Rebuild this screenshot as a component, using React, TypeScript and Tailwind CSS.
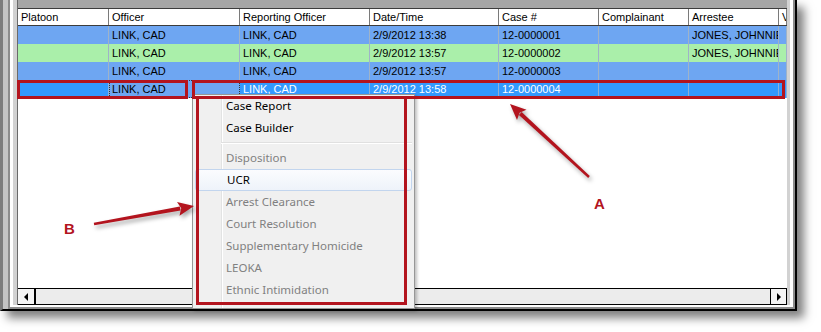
import React from 'react';

type Col = { name: string; w: string };

const cols: Col[] = [
  { name: 'Platoon', w: 'w-[91px]' },
  { name: 'Officer', w: 'w-[131px]' },
  { name: 'Reporting Officer', w: 'w-[130px]' },
  { name: 'Date/Time', w: 'w-[129px]' },
  { name: 'Case #', w: 'w-[100px]' },
  { name: 'Complainant', w: 'w-[90px]' },
  { name: 'Arrestee', w: 'w-[90px]' },
  { name: 'V', w: 'flex-1' },
];

const rows = [
  { bg: 'bg-[#6ea6f2]', cells: ['', 'LINK, CAD', 'LINK, CAD', '2/9/2012 13:38', '12-0000001', '', 'JONES, JOHNNIE', ''] },
  { bg: 'bg-[#aaefaa]', cells: ['', 'LINK, CAD', 'LINK, CAD', '2/9/2012 13:57', '12-0000002', '', 'JONES, JOHNNIE', ''] },
  { bg: 'bg-[#6ea6f2]', cells: ['', 'LINK, CAD', 'LINK, CAD', '2/9/2012 13:57', '12-0000003', '', '', ''] },
];

const selected = ['', 'LINK, CAD', 'LINK, CAD', '2/9/2012 13:58', '12-0000004', '', '', ''];

const menu = [
  { label: 'Case Report', enabled: true },
  { label: 'Case Builder', enabled: true },
  { label: '-', enabled: false },
  { label: 'Disposition', enabled: false },
  { label: 'UCR', enabled: true, hover: true },
  { label: 'Arrest Clearance', enabled: false },
  { label: 'Court Resolution', enabled: false },
  { label: 'Supplementary Homicide', enabled: false },
  { label: 'LEOKA', enabled: false },
  { label: 'Ethnic Intimidation', enabled: false },
];

// arrow shaft + head, tail -> tip
function Arrow({ x1, y1, x2, y2 }: { x1: number; y1: number; x2: number; y2: number }) {
  const dx = x2 - x1;
  const dy = y2 - y1;
  const len = Math.hypot(dx, dy);
  const ux = dx / len;
  const uy = dy / len;
  const px = -uy;
  const py = ux;
  const hl = 16;
  const hw = 7;
  const bx = x2 - ux * hl;
  const by = y2 - uy * hl;
  const shaft = [
    [x1 + px * 1.2, y1 + py * 1.2],
    [bx + ux * 2 + px * 2, by + uy * 2 + py * 2],
    [bx + ux * 2 - px * 2, by + uy * 2 - py * 2],
    [x1 - px * 1.2, y1 - py * 1.2],
  ];
  const head = [
    [x2, y2],
    [bx + px * hw, by + py * hw],
    [bx + ux * 3, by + uy * 3],
    [bx - px * hw, by - py * hw],
  ];
  const pts = (a: number[][]) => a.map((p) => p.join(',')).join(' ');
  return (
    <g>
      <polygon points={pts(shaft)} fill="#b3141e" />
      <polygon points={pts(head)} fill="#b3141e" />
    </g>
  );
}

export default function App() {
  return (
    <div className="relative w-[821px] h-[332px] overflow-hidden bg-white font-['Liberation_Sans',Arial,sans-serif] text-[11px] text-black">
      {/* window frame */}
      <div className="w-[797px] h-[311px] border-r-2 border-b-2 border-black border-l-[3px] border-l-[#7c7c7c] bg-[#c4c4c4] pl-[5px] shadow-[7px_7px_9px_rgba(0,0,0,0.5)]">
        <div className="h-full border-l-2 border-r-2 border-b-2 border-[#8c8c8c]">
          <div className="h-full border-l-[3px] border-r-[3px] border-b-2 border-white">
            <div className="h-full border-l-[4px] border-r-[3px] border-[#d2d2d2]">
              <div className="h-full flex flex-col border-l border-[#6a6a6a] bg-white">
                <div className="h-[8px] bg-[#a6a6a6] shrink-0" />

                {/* header */}
                <div className="h-[18px] shrink-0 flex border-t border-b border-[#3c3c3c] bg-white">
                  {cols.map((c) => (
                    <div
                      key={c.name}
                      className={`${c.w} shrink-0 h-full border-r border-[#7a7a7a] pl-[3px] leading-[16px] overflow-hidden whitespace-nowrap`}
                    >
                      {c.name}
                    </div>
                  ))}
                </div>

                {/* rows */}
                {rows.map((r, i) => (
                  <div key={i} className={`h-[18px] shrink-0 flex ${r.bg}`}>
                    {r.cells.map((t, j) => (
                      <div
                        key={j}
                        className={`${cols[j].w} shrink-0 h-full border-r border-[#9fb3c8] pl-[3px] leading-[18px] overflow-hidden whitespace-nowrap`}
                      >
                        {t}
                      </div>
                    ))}
                  </div>
                ))}
                <div className="h-[18px] shrink-0 flex bg-[#3399ff] text-white">
                  {selected.map((t, j) =>
                    j === 1 ? (
                      <div
                        key={j}
                        className={`${cols[j].w} shrink-0 h-full bg-[#6ea6f2] text-black border border-dotted border-[#333] pl-[2px] leading-[16px] overflow-hidden whitespace-nowrap`}
                      >
                        {t}
                      </div>
                    ) : (
                      <div
                        key={j}
                        className={`${cols[j].w} shrink-0 h-full border-r border-[#8fb0d8] pl-[3px] leading-[18px] overflow-hidden whitespace-nowrap`}
                      >
                        {t}
                      </div>
                    )
                  )}
                </div>

                <div className="flex-1" />

                {/* horizontal scrollbar */}
                <div className="h-[17px] shrink-0 flex border-t border-b border-black bg-[#ececec]">
                  <div className="w-[18px] h-full border-r-2 border-black bg-[#f4f4f4] flex items-center justify-center">
                    <div className="w-0 h-0 border-y-[4px] border-y-transparent border-r-[4px] border-r-black" />
                  </div>
                  <div className="flex-1" />
                  <div className="w-[17px] h-full border-l border-r border-black bg-[#f4f4f4] flex items-center justify-center">
                    <div className="w-0 h-0 border-y-[4px] border-y-transparent border-l-[4px] border-l-black" />
                  </div>
                </div>
              </div>
            </div>
          </div>
        </div>
      </div>

      {/* context menu */}
      <div className="absolute left-[192px] top-[94px] w-[223px] h-[215px] bg-[#f0f0f0] border border-[#979797] shadow-[2px_2px_3px_rgba(0,0,0,0.25)] font-['Noto_Sans',sans-serif] text-[11.5px]">
        <div className="absolute left-[28px] top-0 bottom-0 w-[2px] border-l border-[#e2e3e3] bg-white" />
        <div className="relative flex flex-col">
          {menu.map((m, i) =>
            m.label === '-' ? (
              <div key={i} className="h-[8px] pl-[28px] pr-[2px] flex items-center">
                <div className="w-full h-[2px] border-t border-[#e0e0e0] bg-white" />
              </div>
            ) : m.hover ? (
              <div
                key={i}
                className="h-[22px] mx-[2px] pl-[31px] flex items-center rounded-[3px] border border-[#c2d5ee] bg-gradient-to-b from-[#fbfcfe] to-[#eef3fa]"
              >
                {m.label}
              </div>
            ) : (
              <div
                key={i}
                className={`h-[22px] pl-[33px] flex items-center ${m.enabled ? 'text-black' : 'text-[#808080]'}`}
              >
                {m.label}
              </div>
            )
          )}
        </div>
      </div>

      {/* callout boxes */}
      <div className="absolute left-[17px] top-[80px] w-[171px] h-[19px] border-[3px] border-[#b3141e]" />
      <div className="absolute left-[192px] top-[80px] w-[593px] h-[19px] border-[3px] border-[#b3141e]" />
      <div className="absolute left-[196px] top-[96px] w-[211px] h-[209px] border-[3px] border-[#b3141e]" />

      {/* arrows */}
      <svg
        className="absolute left-0 top-0 w-[821px] h-[332px] pointer-events-none drop-shadow-[2px_3px_2px_rgba(0,0,0,0.35)]"
        viewBox="0 0 821 332"
      >
        <Arrow x1={589} y1={177} x2={510} y2={104} />
        <Arrow x1={94} y1={224} x2={194} y2={206} />
      </svg>

      <div className="absolute left-[594px] top-[196px] text-[15px] font-bold leading-none text-[#b3141e]">A</div>
      <div className="absolute left-[64px] top-[221px] text-[15px] font-bold leading-none text-[#b3141e]">B</div>
    </div>
  );
}
